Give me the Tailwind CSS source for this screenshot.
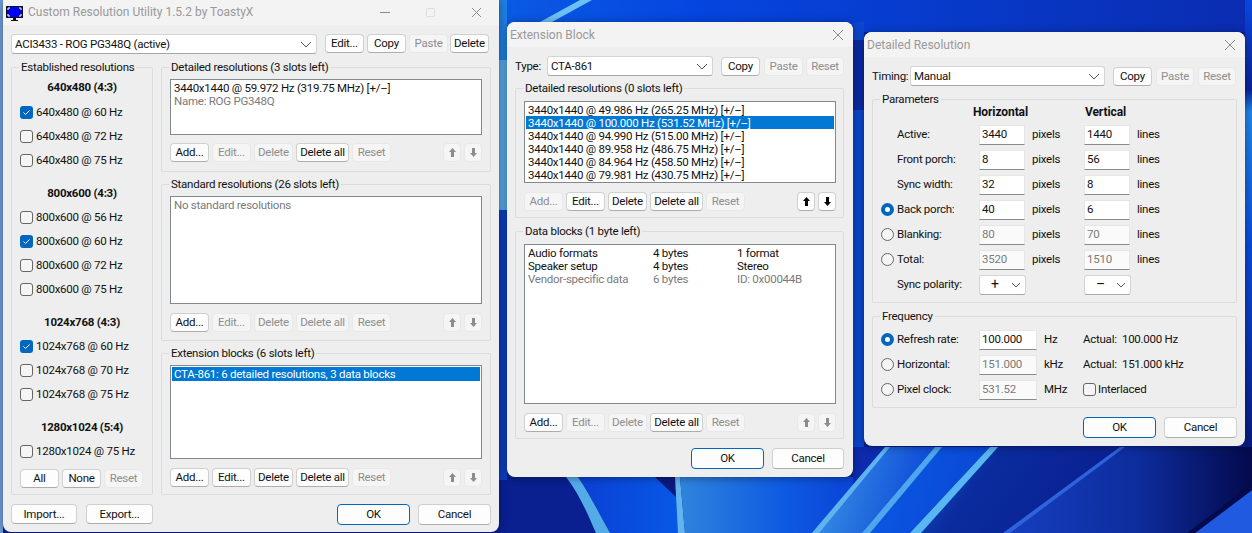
<!DOCTYPE html>
<html>
<head>
<meta charset="utf-8">
<script src="https://cdn.jsdelivr.net/npm/@tailwindcss/browser@4"></script>
</head>
<body class="m-0">
<div class="relative w-[1252px] h-[533px] overflow-hidden bg-[#0b3fbf] font-['Roboto',sans-serif] text-[11.5px] tracking-[-0.25px] leading-[13px] text-[#111]">
<svg class="absolute inset-0" width="1252" height="533" viewBox="0 0 1252 533">
<defs>
<linearGradient id="top" x1="0" y1="0" x2="1" y2="0"><stop offset="0" stop-color="#2c93e4"/><stop offset="0.25" stop-color="#0f6fe6"/><stop offset="0.55" stop-color="#0546e0"/><stop offset="1" stop-color="#0a2cb0"/></linearGradient>
<linearGradient id="side" x1="0" y1="0" x2="0" y2="1"><stop offset="0" stop-color="#0a46dc"/><stop offset="0.2" stop-color="#0a249a"/><stop offset="0.25" stop-color="#1f86ea"/><stop offset="0.55" stop-color="#0a4ada"/><stop offset="0.75" stop-color="#0a38b8"/><stop offset="1" stop-color="#081a80"/></linearGradient>
<linearGradient id="m1" x1="0" y1="0" x2="1" y2="0"><stop offset="0" stop-color="#0a40d4"/><stop offset="1" stop-color="#0858e6"/></linearGradient>
<linearGradient id="m2" x1="0" y1="0" x2="1" y2="0"><stop offset="0" stop-color="#2f84dc"/><stop offset="0.6" stop-color="#0e5ae2"/><stop offset="1" stop-color="#0a44d6"/></linearGradient>
<linearGradient id="b1" x1="0" y1="0" x2="1" y2="0.2"><stop offset="0" stop-color="#3f9be6"/><stop offset="1" stop-color="#0c48d8"/></linearGradient>
<linearGradient id="b2" x1="0" y1="0" x2="1" y2="0.2"><stop offset="0" stop-color="#0a5be4"/><stop offset="1" stop-color="#0a48d6"/></linearGradient>
<linearGradient id="b3" x1="0" y1="0" x2="1" y2="0.3"><stop offset="0" stop-color="#1c6fe0"/><stop offset="0.4" stop-color="#0a2c9e"/><stop offset="1" stop-color="#0a1f90"/></linearGradient>
<linearGradient id="b4" x1="0" y1="0" x2="1" y2="0"><stop offset="0" stop-color="#163fc0"/><stop offset="0.55" stop-color="#0d2c9c"/><stop offset="1" stop-color="#040a4c"/></linearGradient>
</defs>
<rect width="1252" height="533" fill="#0a1f90"/>
<rect width="1252" height="32" fill="url(#top)"/>
<rect x="0" y="0" width="3" height="533" fill="#6f9fd8"/>
<rect x="499" y="0" width="8" height="60" fill="#1f7fe4"/>
<rect x="499" y="60" width="8" height="150" fill="#56a8ea"/>
<rect x="499" y="210" width="8" height="270" fill="#0c3fc4"/>
<path d="M540 22L580 0H592L552 22Z" fill="#6cc0f2"/>
<rect x="853" y="22" width="11" height="430" fill="#0b47cf"/>
<path d="M853 40H864V110H853Z" fill="#0a2aa4"/>
<rect x="1245" y="0" width="7" height="447" fill="url(#side)"/>
<path d="M655 477H678L680 533H610C600 515 590 495 578 477Z" fill="url(#m1)"/>
<path d="M655 477H676V497Z" fill="#0a1a80"/>
<path d="M566 477H578C590 495 600 515 610 533H596C588 515 580 495 566 477Z" fill="#53ace8"/>
<path d="M675 477H680L685 533H678Z" fill="#62b4ee"/>
<path d="M680 477H853V533H685Z" fill="url(#m2)"/>
<path d="M853 447H885V533H853Z" fill="#0c2bae"/>
<path d="M812 533L885 447H935L862 533Z" fill="url(#b1)"/>
<path d="M812 533L885 447H890L819 533Z" fill="#5fb4f0"/>
<path d="M862 533L935 447H990L910 533Z" fill="url(#b2)"/>
<path d="M862 533L935 447H942L870 533Z" fill="#4ea6ec"/>
<path d="M910 533L990 447H1120L1003 533Z" fill="url(#b3)"/>
<path d="M910 533L990 447H998L921 533Z" fill="#58b6f2"/>
<path d="M1003 533L1120 447H1252V490L1195 533Z" fill="url(#b4)"/>
<path d="M1003 533L1120 447H1125L1010 533Z" fill="#2f63dc"/>
<path d="M1195 533L1252 490V533Z" fill="#1f5ae0"/>
<path d="M1195 533L1252 490V484L1187 533Z" fill="#040a4c"/>
</svg>

<!-- Window 1 -->
<div class="absolute left-[3px] top-0 w-[496px] h-[532px] bg-[#eeeeee] rounded-b-[8px] shadow-[0_1px_8px_rgba(0,0,0,0.4)] flex flex-col px-[8px]">
  <div class="relative -mx-[8px] mb-[9px] h-[25px] bg-[#f3f3f3] shrink-0">
    <svg class="absolute left-[3px] top-[6px]" width="17" height="15" viewBox="0 0 17 15"><rect x="0" y="0" width="17" height="12" fill="#111"/><rect x="1" y="1" width="15" height="10" fill="#0000f0"/><path d="M2 4V2H4M13 2H15V4M15 8V10H13M4 10H2V8" stroke="#fff" fill="none"/><rect x="7" y="12" width="3" height="2" fill="#111"/><rect x="5" y="14" width="7" height="1" fill="#111"/></svg>
    <span class="absolute left-[25px] top-[6px] text-[12px] tracking-normal text-[#999] whitespace-nowrap">Custom Resolution Utility 1.5.2 by ToastyX</span>
    <svg class="absolute left-[377px] top-[7px]" width="115" height="12" viewBox="0 0 115 12"><path d="M0 5.500H10" stroke="#888"/><rect x="46.500" y="1.500" width="8" height="8" rx="1" fill="none" stroke="#dcdcdc"/><path d="M92 1L101 10M101 1L92 10" stroke="#8c8c8c"/></svg>
  </div>
  <div class="flex h-[20px] shrink-0">
    <div class="relative w-[306px] h-[20px] bg-white border border-[#d4d4d4] border-b-[#a8a8a8] rounded-[3px] pl-[3px] flex items-center">ACI3433 - ROG PG348Q (active)<svg class="absolute right-[4px] top-[6px]" width="12" height="7" viewBox="0 0 12 7"><path d="M1 1L6 6L11 1" stroke="#555" fill="none"/></svg></div>
    <button class="ml-[8px] w-[39px] h-[19px] bg-[#fdfdfd] border border-[#d0d0d0] border-b-[#adadad] rounded-[4px]">Edit...</button>
    <button class="ml-[3px] w-[39px] h-[19px] bg-[#fdfdfd] border border-[#d0d0d0] border-b-[#adadad] rounded-[4px]">Copy</button>
    <button class="ml-[3px] w-[39px] h-[19px] bg-[#f5f5f5] border border-[#e8e8e8] rounded-[4px] text-[#8e8e8e]">Paste</button>
    <button class="ml-[2px] w-[39px] h-[19px] bg-[#fdfdfd] border border-[#d0d0d0] border-b-[#adadad] rounded-[4px]">Delete</button>
  </div>
  <div class="flex mt-[13px] h-[428px] shrink-0">
    <div class="relative w-[142px] h-[428px] border border-[#dcdcdc] rounded-[2px] flex flex-col pt-[7px]">
      <span class="absolute left-[7px] -top-[7px] px-[2px] bg-[#eeeeee] whitespace-nowrap">Established resolutions</span>
      <div class="h-[24px] mb-px flex items-center justify-center font-bold">640x480 (4:3)</div>
      <div class="h-[24px] flex items-center pl-[8px] gap-[3px]"><span class="w-[13px] h-[13px] rounded-[3px] bg-[#0067c0] flex items-center justify-center"><svg width="9" height="9" viewBox="0 0 9 9"><path d="M1.500 4.500L3.500 6.500L7.500 2.500" stroke="#fff" fill="none"/></svg></span>640x480 @ 60 Hz</div>
      <div class="h-[24px] flex items-center pl-[8px] gap-[3px]"><span class="w-[13px] h-[13px] rounded-[3px] bg-[#f5f5f5] border border-[#666]"></span>640x480 @ 72 Hz</div>
      <div class="h-[24px] flex items-center pl-[8px] gap-[3px]"><span class="w-[13px] h-[13px] rounded-[3px] bg-[#f5f5f5] border border-[#666]"></span>640x480 @ 75 Hz</div>
      <div class="h-[24px] mt-[9px] flex items-center justify-center font-bold">800x600 (4:3)</div>
      <div class="h-[24px] flex items-center pl-[8px] gap-[3px]"><span class="w-[13px] h-[13px] rounded-[3px] bg-[#f5f5f5] border border-[#666]"></span>800x600 @ 56 Hz</div>
      <div class="h-[24px] flex items-center pl-[8px] gap-[3px]"><span class="w-[13px] h-[13px] rounded-[3px] bg-[#0067c0] flex items-center justify-center"><svg width="9" height="9" viewBox="0 0 9 9"><path d="M1.500 4.500L3.500 6.500L7.500 2.500" stroke="#fff" fill="none"/></svg></span>800x600 @ 60 Hz</div>
      <div class="h-[24px] flex items-center pl-[8px] gap-[3px]"><span class="w-[13px] h-[13px] rounded-[3px] bg-[#f5f5f5] border border-[#666]"></span>800x600 @ 72 Hz</div>
      <div class="h-[24px] flex items-center pl-[8px] gap-[3px]"><span class="w-[13px] h-[13px] rounded-[3px] bg-[#f5f5f5] border border-[#666]"></span>800x600 @ 75 Hz</div>
      <div class="h-[24px] mt-[9px] flex items-center justify-center font-bold">1024x768 (4:3)</div>
      <div class="h-[24px] flex items-center pl-[8px] gap-[3px]"><span class="w-[13px] h-[13px] rounded-[3px] bg-[#0067c0] flex items-center justify-center"><svg width="9" height="9" viewBox="0 0 9 9"><path d="M1.500 4.500L3.500 6.500L7.500 2.500" stroke="#fff" fill="none"/></svg></span>1024x768 @ 60 Hz</div>
      <div class="h-[24px] flex items-center pl-[8px] gap-[3px]"><span class="w-[13px] h-[13px] rounded-[3px] bg-[#f5f5f5] border border-[#666]"></span>1024x768 @ 70 Hz</div>
      <div class="h-[24px] flex items-center pl-[8px] gap-[3px]"><span class="w-[13px] h-[13px] rounded-[3px] bg-[#f5f5f5] border border-[#666]"></span>1024x768 @ 75 Hz</div>
      <div class="h-[24px] mt-[9px] flex items-center justify-center font-bold">1280x1024 (5:4)</div>
      <div class="h-[24px] flex items-center pl-[8px] gap-[3px]"><span class="w-[13px] h-[13px] rounded-[3px] bg-[#f5f5f5] border border-[#666]"></span>1280x1024 @ 75 Hz</div>
      <div class="flex pl-[8px] mt-[6px] gap-[3px]">
        <button class="w-[39px] h-[19px] bg-[#fdfdfd] border border-[#d0d0d0] border-b-[#adadad] rounded-[4px]">All</button>
        <button class="w-[39px] h-[19px] bg-[#fdfdfd] border border-[#d0d0d0] border-b-[#adadad] rounded-[4px]">None</button>
        <button class="w-[39px] h-[19px] bg-[#f5f5f5] border border-[#e8e8e8] rounded-[4px] text-[#8e8e8e]">Reset</button>
      </div>
    </div>
    <div class="ml-[8px] w-[330px] flex flex-col">
      <div class="relative h-[105px] border border-[#dcdcdc] rounded-[2px] px-[8px] pt-[11px]">
        <span class="absolute left-[7px] -top-[7px] px-[2px] bg-[#eeeeee] whitespace-nowrap">Detailed resolutions (3 slots left)</span>
        <div class="h-[56px] bg-white border border-[#828790] px-[3px] pt-[2px]"><div>3440x1440 @ 59.972 Hz (319.75 MHz) [+/–]</div><div class="text-[#7a7a7a]">Name: ROG PG348Q</div></div>
        <div class="flex mt-[8px]">
          <button class="w-[39px] h-[19px] bg-[#fdfdfd] border border-[#d0d0d0] border-b-[#adadad] rounded-[4px]">Add...</button>
          <button class="ml-[3px] w-[39px] h-[19px] bg-[#f5f5f5] border border-[#e8e8e8] rounded-[4px] text-[#8e8e8e]">Edit...</button>
          <button class="ml-[3px] w-[39px] h-[19px] bg-[#f5f5f5] border border-[#e8e8e8] rounded-[4px] text-[#8e8e8e]">Delete</button>
          <button class="ml-[3px] w-[53px] h-[19px] bg-[#fdfdfd] border border-[#d0d0d0] border-b-[#adadad] rounded-[4px]">Delete all</button>
          <button class="ml-[3px] w-[39px] h-[19px] bg-[#f5f5f5] border border-[#e8e8e8] rounded-[4px] text-[#8e8e8e]">Reset</button>
          <button class="ml-auto w-[18px] h-[19px] bg-[#f5f5f5] border border-[#e8e8e8] rounded-[4px] flex items-center justify-center"><svg width="9" height="11" viewBox="0 0 9 11"><path d="M4.500 1L8 5H6V10H3V5H1Z" fill="#8c8c8c"/></svg></button>
          <button class="ml-[3px] w-[18px] h-[19px] bg-[#f5f5f5] border border-[#e8e8e8] rounded-[4px] flex items-center justify-center"><svg width="9" height="11" viewBox="0 0 9 11"><path d="M4.500 10L8 6H6V1H3V6H1Z" fill="#8c8c8c"/></svg></button>
        </div>
      </div>
      <div class="relative mt-[12px] h-[157px] border border-[#dcdcdc] rounded-[2px] px-[8px] pt-[11px]">
        <span class="absolute left-[7px] -top-[7px] px-[2px] bg-[#eeeeee] whitespace-nowrap">Standard resolutions (26 slots left)</span>
        <div class="h-[108px] bg-white border border-[#828790] px-[3px] pt-[2px] text-[#7a7a7a]">No standard resolutions</div>
        <div class="flex mt-[9px]">
          <button class="w-[39px] h-[19px] bg-[#fdfdfd] border border-[#d0d0d0] border-b-[#adadad] rounded-[4px]">Add...</button>
          <button class="ml-[3px] w-[39px] h-[19px] bg-[#f5f5f5] border border-[#e8e8e8] rounded-[4px] text-[#8e8e8e]">Edit...</button>
          <button class="ml-[3px] w-[39px] h-[19px] bg-[#f5f5f5] border border-[#e8e8e8] rounded-[4px] text-[#8e8e8e]">Delete</button>
          <button class="ml-[3px] w-[53px] h-[19px] bg-[#f5f5f5] border border-[#e8e8e8] rounded-[4px] text-[#8e8e8e]">Delete all</button>
          <button class="ml-[3px] w-[39px] h-[19px] bg-[#f5f5f5] border border-[#e8e8e8] rounded-[4px] text-[#8e8e8e]">Reset</button>
          <button class="ml-auto w-[18px] h-[19px] bg-[#f5f5f5] border border-[#e8e8e8] rounded-[4px] flex items-center justify-center"><svg width="9" height="11" viewBox="0 0 9 11"><path d="M4.500 1L8 5H6V10H3V5H1Z" fill="#8c8c8c"/></svg></button>
          <button class="ml-[3px] w-[18px] h-[19px] bg-[#f5f5f5] border border-[#e8e8e8] rounded-[4px] flex items-center justify-center"><svg width="9" height="11" viewBox="0 0 9 11"><path d="M4.500 10L8 6H6V1H3V6H1Z" fill="#8c8c8c"/></svg></button>
        </div>
      </div>
      <div class="relative mt-[12px] h-[142px] border border-[#dcdcdc] rounded-[2px] px-[8px] pt-[11px]">
        <span class="absolute left-[7px] -top-[7px] px-[2px] bg-[#eeeeee] whitespace-nowrap">Extension blocks (6 slots left)</span>
        <div class="h-[94px] bg-white border border-[#828790] p-[1px]"><div class="bg-[#0078d4] text-white h-[14px] pl-[2px] flex items-center">CTA-861: 6 detailed resolutions, 3 data blocks</div></div>
        <div class="flex mt-[9px]">
          <button class="w-[39px] h-[19px] bg-[#fdfdfd] border border-[#d0d0d0] border-b-[#adadad] rounded-[4px]">Add...</button>
          <button class="ml-[3px] w-[39px] h-[19px] bg-[#fdfdfd] border border-[#d0d0d0] border-b-[#adadad] rounded-[4px]">Edit...</button>
          <button class="ml-[3px] w-[39px] h-[19px] bg-[#fdfdfd] border border-[#d0d0d0] border-b-[#adadad] rounded-[4px]">Delete</button>
          <button class="ml-[3px] w-[53px] h-[19px] bg-[#fdfdfd] border border-[#d0d0d0] border-b-[#adadad] rounded-[4px]">Delete all</button>
          <button class="ml-[3px] w-[39px] h-[19px] bg-[#f5f5f5] border border-[#e8e8e8] rounded-[4px] text-[#8e8e8e]">Reset</button>
          <button class="ml-auto w-[18px] h-[19px] bg-[#f5f5f5] border border-[#e8e8e8] rounded-[4px] flex items-center justify-center"><svg width="9" height="11" viewBox="0 0 9 11"><path d="M4.500 1L8 5H6V10H3V5H1Z" fill="#8c8c8c"/></svg></button>
          <button class="ml-[3px] w-[18px] h-[19px] bg-[#f5f5f5] border border-[#e8e8e8] rounded-[4px] flex items-center justify-center"><svg width="9" height="11" viewBox="0 0 9 11"><path d="M4.500 10L8 6H6V1H3V6H1Z" fill="#8c8c8c"/></svg></button>
        </div>
      </div>
    </div>
  </div>
  <div class="flex mt-[9px]">
    <button class="w-[66px] h-[20px] bg-[#fdfdfd] border border-[#d0d0d0] border-b-[#adadad] rounded-[4px]">Import...</button>
    <button class="ml-[9px] w-[67px] h-[20px] bg-[#fdfdfd] border border-[#d0d0d0] border-b-[#adadad] rounded-[4px]">Export...</button>
    <button class="ml-auto w-[73px] h-[21px] bg-[#fdfdfd] border border-[#0067c0] rounded-[4px]">OK</button>
    <button class="ml-[8px] w-[73px] h-[21px] bg-[#fdfdfd] border border-[#d0d0d0] border-b-[#adadad] rounded-[4px]">Cancel</button>
  </div>
</div>

<!-- Window 2 -->
<div class="absolute left-[507px] top-[22px] w-[346px] h-[455px] bg-[#eeeeee] rounded-[8px] shadow-[0_1px_8px_rgba(0,0,0,0.4)] flex flex-col pl-[8px] pr-[9px]">
  <div class="relative -ml-[8px] -mr-[9px] mb-[9px] h-[25px] bg-[#f3f3f3] rounded-t-[8px] shrink-0">
    <span class="absolute left-[3px] top-[7px] text-[12px] tracking-normal text-[#999] whitespace-nowrap">Extension Block</span>
    <svg class="absolute left-[325px] top-[7px]" width="12" height="12" viewBox="0 0 12 12"><path d="M1 1L11 11M11 1L1 11" stroke="#8c8c8c"/></svg>
  </div>
  <div class="flex items-start h-[20px] shrink-0">
    <span class="w-[32px] h-[20px] flex items-center">Type:</span>
    <div class="relative w-[166px] h-[20px] bg-white border border-[#d4d4d4] border-b-[#a8a8a8] rounded-[3px] pl-[3px] flex items-center">CTA-861<svg class="absolute right-[4px] top-[6px]" width="12" height="7" viewBox="0 0 12 7"><path d="M1 1L6 6L11 1" stroke="#555" fill="none"/></svg></div>
    <button class="ml-[8px] w-[39px] h-[19px] mt-px bg-[#fdfdfd] border border-[#d0d0d0] border-b-[#adadad] rounded-[4px]">Copy</button>
    <button class="ml-[4px] w-[39px] h-[19px] mt-px bg-[#f5f5f5] border border-[#e8e8e8] rounded-[4px] text-[#8e8e8e]">Paste</button>
    <button class="ml-[3px] w-[38px] h-[19px] mt-px bg-[#f5f5f5] border border-[#e8e8e8] rounded-[4px] text-[#8e8e8e]">Reset</button>
  </div>
  <div class="relative mt-[12px] h-[130px] border border-[#dcdcdc] rounded-[2px] pl-[8px] pr-[7px] pt-[12px] shrink-0">
    <span class="absolute left-[7px] -top-[7px] px-[2px] bg-[#eeeeee] whitespace-nowrap">Detailed resolutions (0 slots left)</span>
    <div class="h-[82px] bg-white border border-[#828790] px-[1px] pt-[1px] overflow-hidden">
      <div class="h-[13px] pl-[2px] leading-[15px]">3440x1440 @ 49.986 Hz (265.25 MHz) [+/–]</div>
      <div class="h-[13px] pl-[2px] leading-[15px] bg-[#0078d4] text-white">3440x1440 @ 100.000 Hz (531.52 MHz) [+/–]</div>
      <div class="h-[13px] pl-[2px] leading-[15px]">3440x1440 @ 94.990 Hz (515.00 MHz) [+/–]</div>
      <div class="h-[13px] pl-[2px] leading-[15px]">3440x1440 @ 89.958 Hz (486.75 MHz) [+/–]</div>
      <div class="h-[13px] pl-[2px] leading-[15px]">3440x1440 @ 84.964 Hz (458.50 MHz) [+/–]</div>
      <div class="h-[13px] pl-[2px] leading-[15px]">3440x1440 @ 79.981 Hz (430.75 MHz) [+/–]</div>
    </div>
    <div class="flex mt-[9px]">
      <button class="w-[39px] h-[19px] bg-[#f5f5f5] border border-[#e8e8e8] rounded-[4px] text-[#8e8e8e]">Add...</button>
      <button class="ml-[3px] w-[39px] h-[19px] bg-[#fdfdfd] border border-[#d0d0d0] border-b-[#adadad] rounded-[4px]">Edit...</button>
      <button class="ml-[3px] w-[39px] h-[19px] bg-[#fdfdfd] border border-[#d0d0d0] border-b-[#adadad] rounded-[4px]">Delete</button>
      <button class="ml-[3px] w-[53px] h-[19px] bg-[#fdfdfd] border border-[#d0d0d0] border-b-[#adadad] rounded-[4px]">Delete all</button>
      <button class="ml-[3px] w-[39px] h-[19px] bg-[#f5f5f5] border border-[#e8e8e8] rounded-[4px] text-[#8e8e8e]">Reset</button>
      <button class="ml-auto w-[18px] h-[19px] bg-[#fdfdfd] border border-[#d0d0d0] border-b-[#adadad] rounded-[4px] flex items-center justify-center"><svg width="9" height="11" viewBox="0 0 9 11"><path d="M4.500 1L8 5H6V10H3V5H1Z" fill="#000"/></svg></button>
      <button class="ml-[3px] w-[18px] h-[19px] bg-[#fdfdfd] border border-[#d0d0d0] border-b-[#adadad] rounded-[4px] flex items-center justify-center"><svg width="9" height="11" viewBox="0 0 9 11"><path d="M4.500 10L8 6H6V1H3V6H1Z" fill="#000"/></svg></button>
    </div>
  </div>
  <div class="relative mt-[13px] h-[208px] border border-[#dcdcdc] rounded-[2px] pl-[8px] pr-[7px] pt-[12px] shrink-0">
    <span class="absolute left-[7px] -top-[7px] px-[2px] bg-[#eeeeee] whitespace-nowrap">Data blocks (1 byte left)</span>
    <div class="h-[160px] bg-white border border-[#828790] pl-[3px] pt-[2px]">
      <div class="h-[13px] flex"><span class="w-[125px]">Audio formats</span><span class="w-[84px]">4 bytes</span><span>1 format</span></div>
      <div class="h-[13px] flex"><span class="w-[125px]">Speaker setup</span><span class="w-[84px]">4 bytes</span><span>Stereo</span></div>
      <div class="h-[13px] flex text-[#7a7a7a]"><span class="w-[125px]">Vendor-specific data</span><span class="w-[84px]">6 bytes</span><span>ID: 0x00044B</span></div>
    </div>
    <div class="flex mt-[9px]">
      <button class="w-[39px] h-[19px] bg-[#fdfdfd] border border-[#d0d0d0] border-b-[#adadad] rounded-[4px]">Add...</button>
      <button class="ml-[3px] w-[39px] h-[19px] bg-[#f5f5f5] border border-[#e8e8e8] rounded-[4px] text-[#8e8e8e]">Edit...</button>
      <button class="ml-[3px] w-[39px] h-[19px] bg-[#f5f5f5] border border-[#e8e8e8] rounded-[4px] text-[#8e8e8e]">Delete</button>
      <button class="ml-[3px] w-[53px] h-[19px] bg-[#fdfdfd] border border-[#d0d0d0] border-b-[#adadad] rounded-[4px]">Delete all</button>
      <button class="ml-[3px] w-[39px] h-[19px] bg-[#f5f5f5] border border-[#e8e8e8] rounded-[4px] text-[#8e8e8e]">Reset</button>
      <button class="ml-auto w-[18px] h-[19px] bg-[#f5f5f5] border border-[#e8e8e8] rounded-[4px] flex items-center justify-center"><svg width="9" height="11" viewBox="0 0 9 11"><path d="M4.500 1L8 5H6V10H3V5H1Z" fill="#8c8c8c"/></svg></button>
      <button class="ml-[3px] w-[18px] h-[19px] bg-[#f5f5f5] border border-[#e8e8e8] rounded-[4px] flex items-center justify-center"><svg width="9" height="11" viewBox="0 0 9 11"><path d="M4.500 10L8 6H6V1H3V6H1Z" fill="#8c8c8c"/></svg></button>
    </div>
  </div>
  <div class="flex justify-end mt-[9px]">
    <button class="w-[73px] h-[21px] bg-[#fdfdfd] border border-[#0067c0] rounded-[4px]">OK</button>
    <button class="ml-[8px] w-[72px] h-[21px] bg-[#fdfdfd] border border-[#d0d0d0] border-b-[#adadad] rounded-[4px]">Cancel</button>
  </div>
</div>

<!-- Window 3 -->
<div class="absolute left-[864px] top-[32px] w-[381px] h-[414px] bg-[#eeeeee] rounded-[8px] shadow-[0_1px_8px_rgba(0,0,0,0.4)] flex flex-col px-[8px]">
  <div class="relative -mx-[8px] mb-[9px] h-[25px] bg-[#f3f3f3] rounded-t-[8px] shrink-0">
    <span class="absolute left-[3px] top-[7px] text-[12px] tracking-normal text-[#999] whitespace-nowrap">Detailed Resolution</span>
    <svg class="absolute left-[360px] top-[7px]" width="12" height="12" viewBox="0 0 12 12"><path d="M1 1L11 11M11 1L1 11" stroke="#8c8c8c"/></svg>
  </div>
  <div class="flex items-start h-[20px] shrink-0">
    <span class="w-[38px] h-[20px] flex items-center">Timing:</span>
    <div class="relative w-[195px] h-[20px] bg-white border border-[#d4d4d4] border-b-[#a8a8a8] rounded-[3px] pl-[3px] flex items-center">Manual<svg class="absolute right-[4px] top-[6px]" width="12" height="7" viewBox="0 0 12 7"><path d="M1 1L6 6L11 1" stroke="#555" fill="none"/></svg></div>
    <button class="ml-[8px] w-[39px] h-[19px] mt-px bg-[#fdfdfd] border border-[#d0d0d0] border-b-[#adadad] rounded-[4px]">Copy</button>
    <button class="ml-[4px] w-[38px] h-[19px] mt-px bg-[#f5f5f5] border border-[#e8e8e8] rounded-[4px] text-[#8e8e8e]">Paste</button>
    <button class="ml-[4px] w-[38px] h-[19px] mt-px bg-[#f5f5f5] border border-[#e8e8e8] rounded-[4px] text-[#8e8e8e]">Reset</button>
  </div>
  <div class="relative mt-[13px] h-[204px] border border-[#dcdcdc] rounded-[2px] pl-[8px] pt-[4px] shrink-0">
    <span class="absolute left-[7px] -top-[7px] px-[2px] bg-[#eeeeee] whitespace-nowrap">Parameters</span>
    <div class="flex h-[16px] items-center font-bold text-[12px] tracking-[-0.1px]"><span class="ml-[92px] w-[112px]">Horizontal</span><span>Vertical</span></div>
    <div class="flex h-[25px] items-center mt-[2px]"><span class="w-[16px]"></span><span class="w-[82px]">Active:</span><span class="w-[46px] h-[20px] bg-white border border-[#e6e6e6] border-b-[#8a8a8a] pl-[2px] flex items-center">3440</span><span class="w-[59px] pl-[7px]">pixels</span><span class="w-[46px] h-[20px] bg-white border border-[#e6e6e6] border-b-[#8a8a8a] pl-[2px] flex items-center">1440</span><span class="pl-[7px]">lines</span></div>
    <div class="flex h-[25px] items-center"><span class="w-[16px]"></span><span class="w-[82px]">Front porch:</span><span class="w-[46px] h-[20px] bg-white border border-[#e6e6e6] border-b-[#8a8a8a] pl-[2px] flex items-center">8</span><span class="w-[59px] pl-[7px]">pixels</span><span class="w-[46px] h-[20px] bg-white border border-[#e6e6e6] border-b-[#8a8a8a] pl-[2px] flex items-center">56</span><span class="pl-[7px]">lines</span></div>
    <div class="flex h-[25px] items-center"><span class="w-[16px]"></span><span class="w-[82px]">Sync width:</span><span class="w-[46px] h-[20px] bg-white border border-[#e6e6e6] border-b-[#8a8a8a] pl-[2px] flex items-center">32</span><span class="w-[59px] pl-[7px]">pixels</span><span class="w-[46px] h-[20px] bg-white border border-[#e6e6e6] border-b-[#8a8a8a] pl-[2px] flex items-center">8</span><span class="pl-[7px]">lines</span></div>
    <div class="flex h-[25px] items-center"><span class="w-[16px]"><span class="block w-[13px] h-[13px] rounded-full bg-white border-[4px] border-[#0067c0]"></span></span><span class="w-[82px]">Back porch:</span><span class="w-[46px] h-[20px] bg-white border border-[#e6e6e6] border-b-[#8a8a8a] pl-[2px] flex items-center">40</span><span class="w-[59px] pl-[7px]">pixels</span><span class="w-[46px] h-[20px] bg-white border border-[#e6e6e6] border-b-[#8a8a8a] pl-[2px] flex items-center">6</span><span class="pl-[7px]">lines</span></div>
    <div class="flex h-[25px] items-center"><span class="w-[16px]"><span class="block w-[13px] h-[13px] rounded-full bg-[#f5f5f5] border border-[#666]"></span></span><span class="w-[82px]">Blanking:</span><span class="w-[46px] h-[20px] bg-[#fafafa] border border-[#e6e6e6] border-b-[#8a8a8a] pl-[2px] flex items-center text-[#7a7a7a]">80</span><span class="w-[59px] pl-[7px]">pixels</span><span class="w-[46px] h-[20px] bg-[#fafafa] border border-[#e6e6e6] border-b-[#8a8a8a] pl-[2px] flex items-center text-[#7a7a7a]">70</span><span class="pl-[7px]">lines</span></div>
    <div class="flex h-[25px] items-center"><span class="w-[16px]"><span class="block w-[13px] h-[13px] rounded-full bg-[#f5f5f5] border border-[#666]"></span></span><span class="w-[82px]">Total:</span><span class="w-[46px] h-[20px] bg-[#fafafa] border border-[#e6e6e6] border-b-[#8a8a8a] pl-[2px] flex items-center text-[#7a7a7a]">3520</span><span class="w-[59px] pl-[7px]">pixels</span><span class="w-[46px] h-[20px] bg-[#fafafa] border border-[#e6e6e6] border-b-[#8a8a8a] pl-[2px] flex items-center text-[#7a7a7a]">1510</span><span class="pl-[7px]">lines</span></div>
    <div class="flex h-[25px] items-center"><span class="w-[16px]"></span><span class="w-[82px]">Sync polarity:</span>
      <span class="relative w-[47px] h-[20px] bg-white border border-[#d4d4d4] border-b-[#a8a8a8] rounded-[3px] pl-[11px] flex items-center text-[14px]">+<svg class="absolute right-[4px] top-[6px]" width="10" height="6" viewBox="0 0 10 6"><path d="M1 1L5 5L9 1" stroke="#555" fill="none"/></svg></span>
      <span class="ml-[58px] relative w-[47px] h-[20px] bg-white border border-[#d4d4d4] border-b-[#a8a8a8] rounded-[3px] pl-[11px] flex items-center text-[14px]">–<svg class="absolute right-[4px] top-[6px]" width="10" height="6" viewBox="0 0 10 6"><path d="M1 1L5 5L9 1" stroke="#555" fill="none"/></svg></span>
    </div>
  </div>
  <div class="relative mt-[13px] h-[92px] border border-[#dcdcdc] rounded-[2px] pl-[8px] pt-[10px] shrink-0">
    <span class="absolute left-[7px] -top-[7px] px-[2px] bg-[#eeeeee] whitespace-nowrap">Frequency</span>
    <div class="flex h-[25px] items-center"><span class="w-[16px]"><span class="block w-[13px] h-[13px] rounded-full bg-white border-[4px] border-[#0067c0]"></span></span><span class="w-[82px]">Refresh rate:</span><span class="w-[58px] h-[20px] bg-white border border-[#e6e6e6] border-b-[#8a8a8a] pl-[2px] flex items-center">100.000</span><span class="w-[46px] pl-[7px]">Hz</span><span>Actual:&nbsp; 100.000 Hz</span></div>
    <div class="flex h-[25px] items-center"><span class="w-[16px]"><span class="block w-[13px] h-[13px] rounded-full bg-[#f5f5f5] border border-[#666]"></span></span><span class="w-[82px]">Horizontal:</span><span class="w-[58px] h-[20px] bg-[#fafafa] border border-[#e6e6e6] border-b-[#8a8a8a] pl-[2px] flex items-center text-[#7a7a7a]">151.000</span><span class="w-[46px] pl-[7px]">kHz</span><span>Actual:&nbsp; 151.000 kHz</span></div>
    <div class="flex h-[25px] items-center"><span class="w-[16px]"><span class="block w-[13px] h-[13px] rounded-full bg-[#f5f5f5] border border-[#666]"></span></span><span class="w-[82px]">Pixel clock:</span><span class="w-[58px] h-[20px] bg-[#fafafa] border border-[#e6e6e6] border-b-[#8a8a8a] pl-[2px] flex items-center text-[#7a7a7a]">531.52</span><span class="w-[46px] pl-[7px]">MHz</span><span class="w-[13px] h-[13px] rounded-[3px] bg-[#f5f5f5] border border-[#666] mr-[2px]"></span><span>Interlaced</span></div>
  </div>
  <div class="flex justify-end mt-[9px]">
    <button class="w-[73px] h-[21px] bg-[#fdfdfd] border border-[#0067c0] rounded-[4px]">OK</button>
    <button class="ml-[8px] w-[73px] h-[21px] bg-[#fdfdfd] border border-[#d0d0d0] border-b-[#adadad] rounded-[4px]">Cancel</button>
  </div>
</div>
</div>
</body>
</html>
